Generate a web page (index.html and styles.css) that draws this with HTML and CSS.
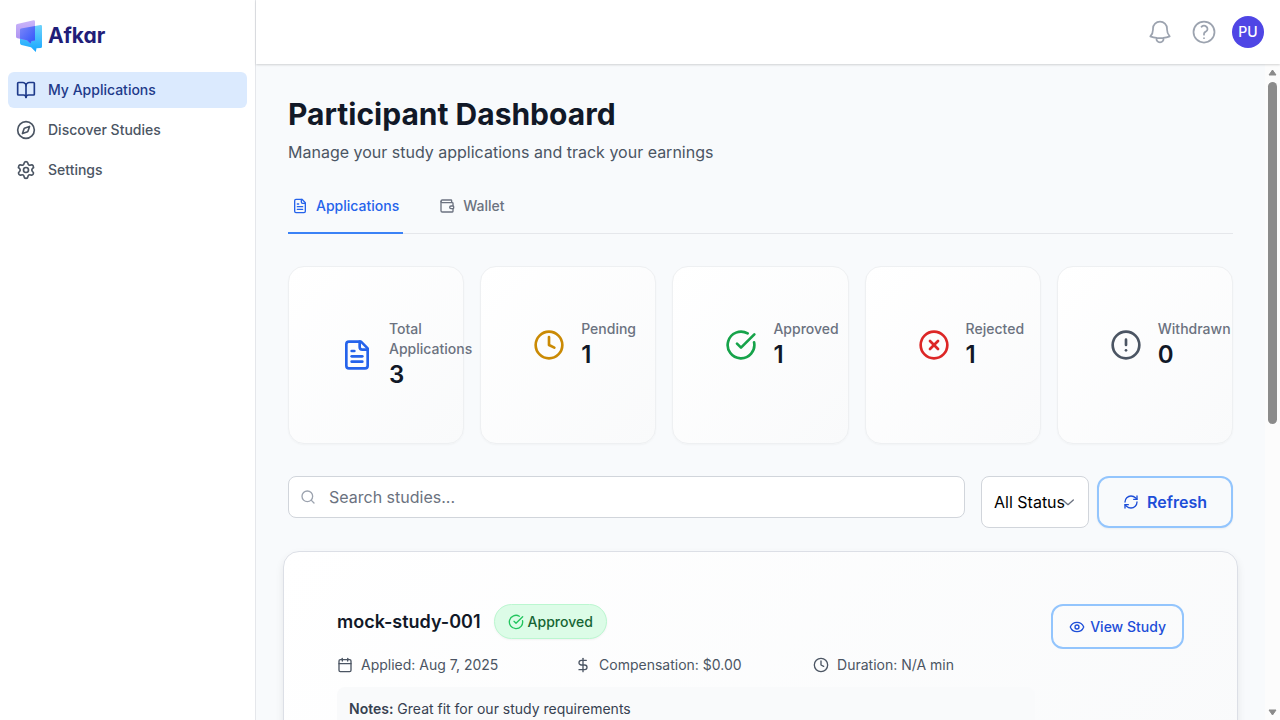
FILE: index.html
```html
<!DOCTYPE html>
<html lang="en">
<head>
<meta charset="utf-8">
<title>Afkar - Participant Dashboard</title>
<link rel="stylesheet" href="styles.css">
</head>
<body>
<svg class="sprite" aria-hidden="true">
  <symbol id="book" viewBox="0 0 24 24"><path d="M12 7v14"/><path d="M3 18a1 1 0 0 1-1-1V4a1 1 0 0 1 1-1h5a4 4 0 0 1 4 4 4 4 0 0 1 4-4h5a1 1 0 0 1 1 1v13a1 1 0 0 1-1 1h-6a3 3 0 0 0-3 3 3 3 0 0 0-3-3z"/></symbol>
  <symbol id="compass" viewBox="0 0 24 24"><path d="m16.24 7.76-1.804 5.411a2 2 0 0 1-1.265 1.265L7.76 16.24l1.804-5.411a2 2 0 0 1 1.265-1.265z"/><circle cx="12" cy="12" r="10"/></symbol>
  <symbol id="settings" viewBox="0 0 24 24"><path d="M9.671 4.136a2.34 2.34 0 0 1 4.659 0 2.34 2.34 0 0 0 3.319 1.915 2.34 2.34 0 0 1 2.33 4.033 2.34 2.34 0 0 0 0 3.831 2.34 2.34 0 0 1-2.33 4.033 2.34 2.34 0 0 0-3.319 1.915 2.34 2.34 0 0 1-4.659 0 2.34 2.34 0 0 0-3.32-1.915 2.34 2.34 0 0 1-2.33-4.033 2.34 2.34 0 0 0 0-3.831A2.34 2.34 0 0 1 6.35 6.051a2.34 2.34 0 0 0 3.319-1.915"/><circle cx="12" cy="12" r="3"/></symbol>
  <symbol id="bell" viewBox="0 0 24 24"><path d="M14.857 17.082a23.848 23.848 0 0 0 5.454-1.31A8.967 8.967 0 0 1 18 9.75V9A6 6 0 0 0 6 9v.75a8.967 8.967 0 0 1-2.312 6.022c1.733.64 3.56 1.085 5.455 1.31m5.714 0a24.255 24.255 0 0 1-5.714 0m5.714 0a3 3 0 1 1-5.714 0"/></symbol>
  <symbol id="help" viewBox="0 0 24 24"><path d="M9.879 7.519c1.171-1.025 3.071-1.025 4.242 0 1.172 1.025 1.172 2.687 0 3.712-.203.179-.43.326-.67.442-.745.361-1.45.999-1.45 1.827v.75M21 12a9 9 0 1 1-18 0 9 9 0 0 1 18 0Zm-9 5.25h.008v.008H12v-.008Z"/></symbol>
  <symbol id="file" viewBox="0 0 24 24"><path d="M15 2H6a2 2 0 0 0-2 2v16a2 2 0 0 0 2 2h12a2 2 0 0 0 2-2V7Z"/><path d="M14 2v4a2 2 0 0 0 2 2h4"/><path d="M10 9H8"/><path d="M16 13H8"/><path d="M16 17H8"/></symbol>
  <symbol id="wallet" viewBox="0 0 24 24"><path d="M19 7V4a1 1 0 0 0-1-1H5a2 2 0 0 0 0 4h15a1 1 0 0 1 1 1v4h-3a2 2 0 0 0 0 4h3a1 1 0 0 0 1-1v-2a1 1 0 0 0-1-1"/><path d="M3 5v14a2 2 0 0 0 2 2h15a1 1 0 0 0 1-1v-4"/></symbol>
  <symbol id="clock" viewBox="0 0 24 24"><circle cx="12" cy="12" r="10"/><path d="M12 6v6l4 2"/></symbol>
  <symbol id="check" viewBox="0 0 24 24"><path d="M21.801 10A10 10 0 1 1 17 3.335"/><path d="m9 11 3 3L22 4"/></symbol>
  <symbol id="reject" viewBox="0 0 24 24"><circle cx="12" cy="12" r="10"/><path d="m15 9-6 6"/><path d="m9 9 6 6"/></symbol>
  <symbol id="alert" viewBox="0 0 24 24"><circle cx="12" cy="12" r="10"/><path d="M12 8v4"/><path d="M12 16h.01"/></symbol>
  <symbol id="search" viewBox="0 0 24 24"><circle cx="11" cy="11" r="8"/><path d="m21 21-4.300-4.300"/></symbol>
  <symbol id="chevron" viewBox="0 0 24 24"><path d="m4 9 8 7 8-7"/></symbol>
  <symbol id="refresh" viewBox="0 0 24 24"><path d="M3 12a9 9 0 0 1 9-9 9.750 9.750 0 0 1 6.740 2.740L21 8"/><path d="M21 3v5h-5"/><path d="M21 12a9 9 0 0 1-9 9 9.750 9.750 0 0 1-6.740-2.740L3 16"/><path d="M8 16H3v5"/></symbol>
  <symbol id="eye" viewBox="0 0 24 24"><path d="M2.062 12.348a1 1 0 0 1 0-.696 10.750 10.750 0 0 1 19.876 0 1 1 0 0 1 0 .696 10.750 10.750 0 0 1-19.876 0"/><circle cx="12" cy="12" r="3"/></symbol>
  <symbol id="calendar" viewBox="0 0 24 24"><path d="M8 2v4"/><path d="M16 2v4"/><rect x="3" y="4" width="18" height="18" rx="2"/><path d="M3 10h18"/></symbol>
  <symbol id="dollar" viewBox="0 0 24 24"><path d="M12 2v20"/><path d="M17 5H9.500a3.500 3.500 0 0 0 0 7h5a3.500 3.500 0 0 1 0 7H6"/></symbol>
</svg>
<div class="app">
  <aside class="sidebar">
    <a class="brand" href="#">
      <svg class="brand-mark" viewBox="0 0 26 32" aria-hidden="true">
        <defs>
          <linearGradient id="lilac" x1="0" y1="0" x2="0" y2="1"><stop offset="0" stop-color="#cbb6fa"/><stop offset="1" stop-color="#a78bf0"/></linearGradient>
          <linearGradient id="cyan" x1="0" y1="0" x2="0" y2="1"><stop offset="0" stop-color="#6fd3fb"/><stop offset="1" stop-color="#16a6ff"/></linearGradient>
          <linearGradient id="blue" x1="0" y1="0" x2="1" y2="1"><stop offset="0" stop-color="#7c86f8"/><stop offset="1" stop-color="#2f55fb"/></linearGradient>
        </defs>
        <path fill="url(#cyan)" d="M5 8.500 24.500 5Q26 4.800 26 6.200V26.500Q26 28 24.500 28L20.500 28.200 19.800 32 15 27.300 5.500 25Q4 24.600 4 23V9.800Q4 8.700 5 8.500Z"/>
        <path fill="url(#lilac)" d="M1.200 4 17.500.2Q19 0 19 1.500V20.500L15.500 21 14.500 23.500 11 20.200 1.500 18.300Q0 18 0 16.500V5.400Q0 4.300 1.200 4Z"/>
        <path fill="url(#blue)" d="M5 8.500 19 6V20.500L15.500 21 14.500 23.500 11 20.200 4 18.800V9.800Q4 8.700 5 8.500Z"/>
      </svg>
      <span class="brand-name">Afkar</span>
    </a>
    <nav class="nav" aria-label="Main">
      <a class="nav-link active" href="#"><svg class="icon icon-20"><use href="#book"/></svg>My Applications</a>
      <a class="nav-link" href="#"><svg class="icon icon-20"><use href="#compass"/></svg>Discover Studies</a>
      <a class="nav-link" href="#"><svg class="icon icon-20"><use href="#settings"/></svg>Settings</a>
    </nav>
  </aside>
  <div class="page">
    <header class="topbar">
      <button class="icon-button" aria-label="Notifications"><svg class="icon icon-28 thin"><use href="#bell"/></svg></button>
      <button class="icon-button" aria-label="Help"><svg class="icon icon-28 thin"><use href="#help"/></svg></button>
      <button class="avatar" aria-label="Account">PU</button>
    </header>
    <div class="body">
      <main class="content">
        <h1 class="title">Participant Dashboard</h1>
        <p class="subtitle">Manage your study applications and track your earnings</p>
        <nav class="tabs" aria-label="Dashboard sections">
          <button class="tab selected"><svg class="icon icon-16"><use href="#file"/></svg>Applications</button>
          <button class="tab"><svg class="icon icon-16"><use href="#wallet"/></svg>Wallet</button>
        </nav>
        <section class="stats" aria-label="Totals">
          <div class="stat"><svg class="icon icon-32 blue"><use href="#file"/></svg><div><p class="stat-label">Total Applications</p><p class="stat-value">3</p></div></div>
          <div class="stat"><svg class="icon icon-32 amber"><use href="#clock"/></svg><div><p class="stat-label">Pending</p><p class="stat-value">1</p></div></div>
          <div class="stat"><svg class="icon icon-32 green"><use href="#check"/></svg><div><p class="stat-label">Approved</p><p class="stat-value">1</p></div></div>
          <div class="stat"><svg class="icon icon-32 red"><use href="#reject"/></svg><div><p class="stat-label">Rejected</p><p class="stat-value">1</p></div></div>
          <div class="stat"><svg class="icon icon-32 gray"><use href="#alert"/></svg><div><p class="stat-label">Withdrawn</p><p class="stat-value">0</p></div></div>
        </section>
        <form class="filters">
          <div class="search">
            <svg class="icon icon-16 search-icon"><use href="#search"/></svg>
            <input class="search-input" type="text" placeholder="Search studies..." aria-label="Search studies">
          </div>
          <div class="filter-actions">
            <div class="status">
              <svg class="icon icon-16 status-icon"><use href="#chevron"/></svg>
              <select class="status-select" aria-label="Status"><option>All Status</option></select>
            </div>
            <button class="refresh" type="button"><svg class="icon icon-16"><use href="#refresh"/></svg>Refresh</button>
          </div>
        </form>
        <article class="study">
          <div class="study-main">
            <div class="study-head">
              <h2 class="study-name">mock-study-001</h2>
              <span class="badge"><svg class="icon icon-16 badge-icon"><use href="#check"/></svg>Approved</span>
            </div>
            <div class="facts">
              <span class="fact"><svg class="icon icon-16"><use href="#calendar"/></svg>Applied: Aug 7, 2025</span>
              <span class="fact"><svg class="icon icon-16"><use href="#dollar"/></svg>Compensation: $0.00</span>
              <span class="fact"><svg class="icon icon-16"><use href="#clock"/></svg>Duration: N/A min</span>
            </div>
            <p class="notes"><strong>Notes:</strong> Great fit for our study requirements</p>
          </div>
          <button class="view"><svg class="icon icon-16"><use href="#eye"/></svg>View Study</button>
        </article>
      </main>
      <div class="scrollbar" aria-hidden="true">
        <svg class="arrow" viewBox="0 0 9 7"><path d="M4.500 1 8 6H1Z"/></svg>
        <div class="track"><div class="thumb"></div></div>
        <svg class="arrow" viewBox="0 0 9 7"><path d="M4.500 6 8 1H1Z"/></svg>
      </div>
    </div>
  </div>
</div>
</body>
</html>
```
FILE: styles.css
```css
* { box-sizing: border-box; }
body { margin: 0; font-family: Inter, "Liberation Sans", sans-serif; font-size: 16px; line-height: 24px; color: #111827; background: #f8fafc; }
h1, h2, p { margin: 0; }
a { color: inherit; text-decoration: none; }
button, input, select { font: inherit; color: inherit; margin: 0; }
button { background: none; border: 0; padding: 0; cursor: pointer; }

.sprite { display: none; }
.icon { flex: none; fill: none; stroke: currentColor; stroke-width: 2; stroke-linecap: round; stroke-linejoin: round; }
.icon-16 { width: 16px; height: 16px; }
.icon-20 { width: 20px; height: 20px; }
.icon-28 { width: 28px; height: 28px; }
.icon-32 { width: 32px; height: 32px; }
.thin { stroke-width: 1.5; }

.app { display: flex; height: 100vh; overflow: hidden; }

.sidebar { flex: none; width: 256px; background: #fff; border-right: 1px solid #e5e7eb; }
.brand { display: flex; align-items: center; gap: 6px; height: 72px; padding: 0 16px; }
.brand-mark { width: 26px; height: 32px; }
.brand-name { font-size: 21px; font-weight: 700; font-feature-settings: "cv11"; color: #211d78; }
.nav { display: flex; flex-direction: column; gap: 4px; padding: 0 8px; }
.nav-link { display: flex; align-items: center; gap: 12px; padding: 8px; border-radius: 6px; font-size: 14px; line-height: 20px; font-weight: 500; color: #4b5563; }
.nav-link.active { background: #dbeafe; color: #1e3a8a; }

.page { flex: 1; min-width: 0; display: flex; flex-direction: column; }
.topbar { position: relative; flex: none; display: flex; align-items: center; justify-content: flex-end; gap: 14px; height: 64px; padding: 0 16px; background: #fff; box-shadow: 0 1px 2px rgba(0, 0, 0, 0.16); }
.icon-button { display: flex; align-items: center; justify-content: center; width: 28px; height: 28px; color: #9ca3af; margin-right: 2px; }
.icon-button + .avatar { margin-left: -2px; }
.avatar { width: 32px; height: 32px; border-radius: 50%; background: #4f46e5; color: #fff; font-size: 14px; line-height: 20px; font-weight: 500; }

.body { flex: 1; min-height: 0; display: flex; }
.content { flex: 1; min-width: 0; padding: 32px; overflow-y: auto; scrollbar-width: none; }
.title { font-size: 30px; line-height: 36px; font-weight: 700; }
.subtitle { margin-top: 8px; color: #4b5563; }

.tabs { display: flex; gap: 32px; margin-top: 16px; border-bottom: 1px solid #e5e7eb; }
.tab { display: flex; align-items: center; gap: 8px; margin-bottom: -1px; padding: 16px 4px; border-bottom: 2px solid transparent; font-size: 14px; line-height: 20px; font-weight: 500; color: #6b7280; }
.tab.selected { color: #2563eb; border-color: #3b82f6; }

.stats { display: grid; grid-template-columns: repeat(5, minmax(0, 1fr)); gap: 16px; margin-top: 32px; }
.stat { display: flex; align-items: flex-start; gap: 16px; padding: 52px; border: 1px solid #eef0f2; border-radius: 16px; background: linear-gradient(135deg, #fff, #f9fafb); box-shadow: 0 1px 2px rgba(0, 0, 0, 0.03); }
.stat .icon { margin-top: 10px; }
.stat:first-child .icon { margin-top: 20px; }
.stat-label { font-size: 14px; line-height: 20px; font-weight: 500; color: #6b7280; }
.stat-value { font-size: 24px; line-height: 32px; font-weight: 600; }
.blue { color: #2563eb; }
.amber { color: #ca8a04; }
.green { color: #16a34a; }
.red { color: #dc2626; }
.gray { color: #4b5563; }

.filters { display: flex; align-items: flex-start; gap: 16px; margin-top: 32px; }
.search { position: relative; flex: 1; }
.search-icon { position: absolute; left: 12px; top: 13px; color: #9ca3af; }
.search-input { display: block; width: 100%; padding: 8px 16px 8px 40px; border: 1px solid #d1d5db; border-radius: 8px; background: #fff; line-height: 24px; }
.search-input::placeholder { color: #6b7280; opacity: 1; }
.filter-actions { display: flex; gap: 8px; }
.status { position: relative; display: flex; width: 108px; }
.status-select { appearance: none; width: 100%; padding: 0 12px; border: 1px solid #d1d5db; border-radius: 8px; background: #fff; color: #000; }
.status-icon { position: absolute; right: 13px; top: 18px; color: #6b7280; pointer-events: none; }
.refresh { display: flex; align-items: center; gap: 8px; padding: 12px 24px; border: 2px solid #93c5fd; border-radius: 12px; font-weight: 600; color: #1d4ed8; box-shadow: 0 1px 2px rgba(0, 0, 0, 0.05); }

.study { display: flex; align-items: flex-start; gap: 16px; margin: 23px -5px 0 -5px; padding: 52px 53px; border: 1px solid #dcdfe6; border-radius: 16px; background: linear-gradient(135deg, #fff, #f9fafb); box-shadow: 0 4px 8px rgba(0, 0, 0, 0.08); }
.study-main { flex: 1; min-width: 0; }
.study-head { display: flex; align-items: center; gap: 13px; }
.study-name { font-size: 18px; line-height: 28px; font-weight: 600; }
.badge { display: flex; align-items: center; gap: 4px; padding: 6px 13px; border: 1px solid #bbf7d0; border-radius: 18px; background: #dcfce7; font-size: 14px; line-height: 21px; font-weight: 500; color: #166534; box-shadow: 0 1px 2px rgba(0, 0, 0, 0.05); }
.badge-icon { color: #22c55e; }
.facts { display: grid; grid-template-columns: repeat(3, minmax(0, 1fr)); gap: 16px; margin-top: 16px; font-size: 14px; line-height: 20px; color: #4b5563; }
.fact { display: flex; align-items: center; gap: 8px; }
.notes { margin-top: 12px; padding: 12px; border-radius: 8px; background: #f9fafb; font-size: 14px; line-height: 20px; color: #374151; }
.notes strong { font-weight: 600; }
.view { display: flex; align-items: center; gap: 5px; padding: 10px 16px; border: 2px solid #93c5fd; border-radius: 12px; font-size: 14px; line-height: 21px; font-weight: 500; color: #1d4ed8; }

.scrollbar { flex: none; display: flex; flex-direction: column; align-items: center; width: 15px; padding: 5px 0 4px; background: #fcfcfc; }
.arrow { width: 9px; height: 7px; fill: #8b8b8b; stroke: #8b8b8b; stroke-width: 1; stroke-linejoin: round; }
.track { flex: 1; width: 9px; margin: 6px 0; }
.thumb { height: 55%; border-radius: 5px; background: #8b8b8b; }
```
